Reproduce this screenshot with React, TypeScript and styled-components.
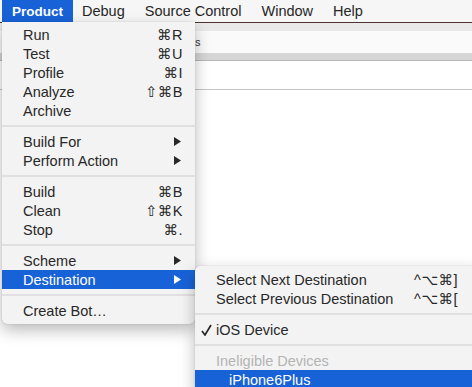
import React from "react";
import styled, { createGlobalStyle } from "styled-components";

const GlobalStyle = createGlobalStyle`
  html, body {
    margin: 0;
    padding: 0;
    background: #ffffff;
  }
  body {
    font-family: "Liberation Sans", "DejaVu Sans", Arial, sans-serif;
    overflow: hidden;
  }
`;

const BLUE = "#1862d8";

type Entry =
  | { kind: "item"; label: string; key?: string; sub?: boolean; active?: boolean; checked?: boolean; disabled?: boolean; indent?: boolean }
  | { kind: "sep" };

const productMenu: Entry[] = [
  { kind: "item", label: "Run", key: "⌘R" },
  { kind: "item", label: "Test", key: "⌘U" },
  { kind: "item", label: "Profile", key: "⌘I" },
  { kind: "item", label: "Analyze", key: "⇧⌘B" },
  { kind: "item", label: "Archive" },
  { kind: "sep" },
  { kind: "item", label: "Build For", sub: true },
  { kind: "item", label: "Perform Action", sub: true },
  { kind: "sep" },
  { kind: "item", label: "Build", key: "⌘B" },
  { kind: "item", label: "Clean", key: "⇧⌘K" },
  { kind: "item", label: "Stop", key: "⌘." },
  { kind: "sep" },
  { kind: "item", label: "Scheme", sub: true },
  { kind: "item", label: "Destination", sub: true, active: true },
  { kind: "sep" },
  { kind: "item", label: "Create Bot…" },
];

const destinationMenu: Entry[] = [
  { kind: "item", label: "Select Next Destination", key: "^⌥⌘]" },
  { kind: "item", label: "Select Previous Destination", key: "^⌥⌘[" },
  { kind: "sep" },
  { kind: "item", label: "iOS Device", checked: true },
  { kind: "sep" },
  { kind: "item", label: "Ineligible Devices", disabled: true },
  { kind: "item", label: "iPhone6Plus", active: true, indent: true },
];

function Menu({ entries }: { entries: Entry[] }) {
  return (
    <>
      {entries.map((e, i) =>
        e.kind === "sep" ? (
          <Separator key={i} />
        ) : (
          <Item key={i} $active={e.active} $disabled={e.disabled}>
            <Mark>
              {e.checked && (
                <svg width="11" height="12" viewBox="0 0 11 12">
                  <path d="M1 7 L4 11 L10 1" fill="none" stroke="currentColor" strokeWidth="1.7" />
                </svg>
              )}
            </Mark>
            <Label $indent={e.indent}>{e.label}</Label>
            {e.key && <Shortcut>{e.key}</Shortcut>}
            {e.sub && (
              <Arrow width="7" height="9" viewBox="0 0 7 9">
                <polygon points="0,0 7,4.5 0,9" fill="currentColor" />
              </Arrow>
            )}
          </Item>
        )
      )}
    </>
  );
}

export default function App() {
  return (
    <Screen>
      <GlobalStyle />

      <MenuBar>
        <BarTitle $active>Product</BarTitle>
        <BarTitle>Debug</BarTitle>
        <BarTitle>Source Control</BarTitle>
        <BarTitle>Window</BarTitle>
        <BarTitle>Help</BarTitle>
      </MenuBar>

      <ToolbarBand />
      <TabRow>
        {/* only the tail of the tab title peeks out from behind the menu */}
        <TabLabel>s</TabLabel>
      </TabRow>
      <HeaderBand />
      <ContentRow />

      <ProductMenu>
        <Menu entries={productMenu} />
      </ProductMenu>

      <Submenu>
        <Menu entries={destinationMenu} />
      </Submenu>
    </Screen>
  );
}

const Screen = styled.div`
  position: relative;
  width: 472px;
  height: 387px;
  overflow: hidden;
  background: #ffffff;
`;

const MenuBar = styled.div`
  display: flex;
  height: 22px;
  padding-left: 2px;
  background: #f6f6f6;
  border-bottom: 1px solid #4d3333;
`;

const BarTitle = styled.div<{ $active?: boolean }>`
  display: flex;
  align-items: center;
  padding: 0 ${(p) => (p.$active ? "10px" : "9px")};
  margin-right: ${(p) => (p.$active ? "0" : "2px")};
  font-size: ${(p) => (p.$active ? "13.5px" : "14.5px")};
  font-weight: ${(p) => (p.$active ? 700 : 400)};
  color: ${(p) => (p.$active ? "#ffffff" : "#262626")};
  background: ${(p) => (p.$active ? BLUE : "transparent")};
`;

const ToolbarBand = styled.div`
  height: 8px;
  background: #e9e9e9;
`;

const TabRow = styled.div`
  display: flex;
  align-items: center;
  height: 22px;
  background: #fafafa;
`;

const TabLabel = styled.span`
  margin-left: 195px;
  font-size: 11px;
  color: #333;
`;

const HeaderBand = styled.div`
  height: 7px;
  background: #d6d6d6;
  border-bottom: 1px solid #b6b6b6;
`;

const ContentRow = styled.div`
  height: 28px;
  background: #ffffff;
  border-bottom: 1px solid #c6c6c6;
`;

const MenuPanel = styled.div`
  position: absolute;
  background: #f3f3f3;
  box-shadow: 0 6px 16px rgba(0, 0, 0, 0.28), 0 0 1px rgba(0, 0, 0, 0.35);
`;

const ProductMenu = styled(MenuPanel)`
  left: 2px;
  top: 22px;
  width: 193px;
  padding: 3px 0 4px;
  border-radius: 0 0 5px 5px;
`;

const Item = styled.div<{ $active?: boolean; $disabled?: boolean }>`
  display: flex;
  align-items: center;
  height: 19px;
  padding: 0 12px 0 6px;
  font-size: 14.5px;
  color: ${(p) => (p.$active ? "#ffffff" : p.$disabled ? "#b4b4b4" : "#282828")};
  background: ${(p) => (p.$active ? BLUE : "transparent")};
  white-space: nowrap;
`;

const Mark = styled.span`
  display: flex;
  align-items: center;
  width: 15px;
  flex: none;
`;

const Label = styled.span<{ $indent?: boolean }>`
  flex: 1;
  padding-left: ${(p) => (p.$indent ? "13px" : "0")};
`;

const Shortcut = styled.span`
  font-family: "Liberation Sans", "DejaVu Sans", sans-serif;
  font-size: 14.5px;
  letter-spacing: 0.5px;
`;

const Arrow = styled.svg`
  margin-right: 2px;
`;

const Separator = styled.div`
  height: 2px;
  margin: 5px 0;
  background: #e0e0e0;
`;

const Submenu = styled(MenuPanel)`
  left: 195px;
  top: 266px;
  width: 290px;
  padding: 4px 0 4px;
  border-radius: 5px;

  ${Item} {
    padding-right: 27px;
  }
`;
